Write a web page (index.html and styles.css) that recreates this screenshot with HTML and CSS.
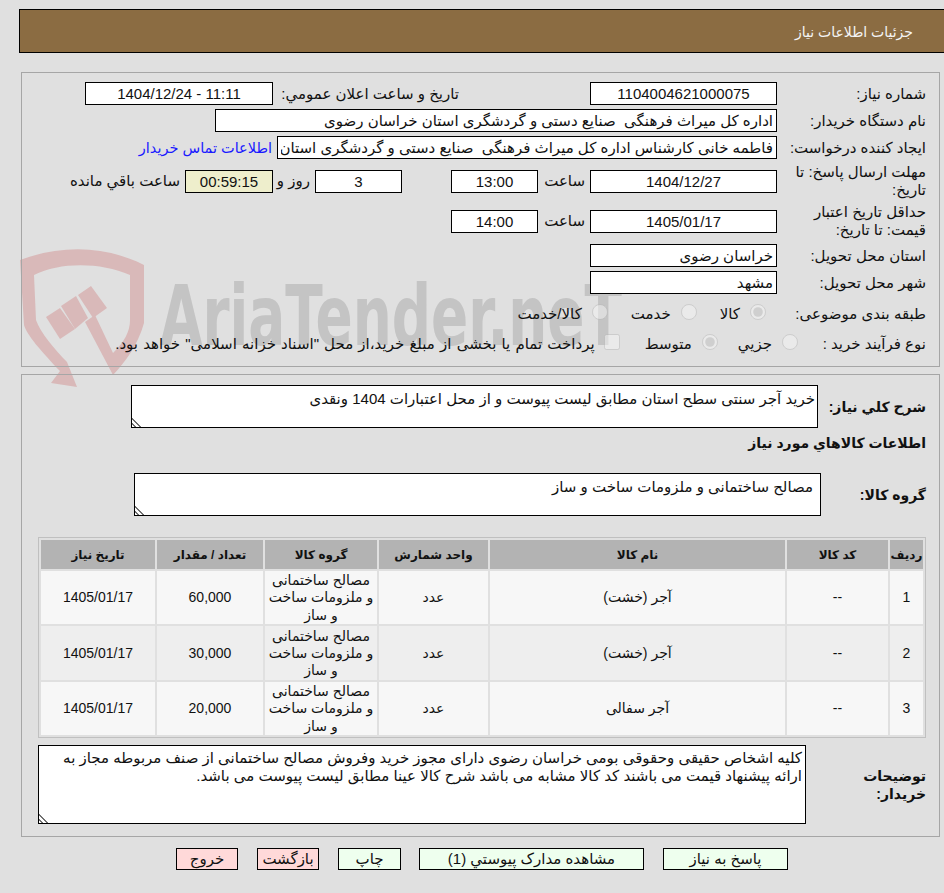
FILE: index.html
```html
<!DOCTYPE html>
<html lang="fa" dir="rtl">
<head>
  <meta charset="UTF-8">
  <title>جزئیات اطلاعات نیاز</title>
  <link rel="stylesheet" href="styles.css">
</head>
<body>

  <svg class="watermark" viewBox="0 0 944 400" width="944" height="400" aria-hidden="true">
    <path class="mark-red" d="M20 260 C60 245 105 245 144 265 L144 323 C138 345 125 362 113 375 L85 322 L95 315 L113 353 C124 342 130 332 130 320 L130 275 C100 262 60 262 34 275 L36 320 C40 332 55 350 67 362 L77 387 L51 383 L60 371 C40 350 27 335 24 325 Z"/>
    <polygon class="mark-red" points="46,317 60,308 75,329 60,339"/>
    <polygon class="mark-red" points="61,306 76,296 88,318 75,329"/>
    <polygon class="mark-red" points="78,295 91,286 107,308 93,318"/>
    <text class="mark-text" x="160" y="345" textLength="462" lengthAdjust="spacingAndGlyphs">AriaTender.neT</text>
  </svg>

  <div class="page-title">جزئیات اطلاعات نیاز</div>

  <div class="panel panel-top">
    <div class="row">
      <label class="row-label">شماره نیاز:</label>
      <input class="box box-date center" value="1104004621000075" readonly>
      <label class="public-label">تاریخ و ساعت اعلان عمومي:</label>
      <input class="box box-public center" value="11:11 - 1404/12/24" readonly>
    </div>
    <div class="row">
      <label class="row-label">نام دستگاه خریدار:</label>
      <input class="box box-buyer" value="اداره کل میراث فرهنگی  صنایع دستی و گردشگری استان خراسان رضوی" readonly>
    </div>
    <div class="row">
      <label class="row-label">ایجاد کننده درخواست:</label>
      <input class="box box-creator" value="فاطمه خانی کارشناس اداره کل میراث فرهنگی  صنایع دستی و گردشگری استان خراسان رضوی" readonly>
      <a class="contact" href="#">اطلاعات تماس خریدار</a>
    </div>
    <div class="row row-tall">
      <label class="row-label">مهلت ارسال پاسخ: تا تاریخ:</label>
      <input class="box box-date center" value="1404/12/27" readonly>
      <span class="hour-label">ساعت</span>
      <input class="box box-hour center" value="13:00" readonly>
      <input class="box box-days center" value="3" readonly>
      <span class="days-label">روز و</span>
      <input class="box box-timer center" value="00:59:15" readonly>
      <span class="left-label">ساعت باقي مانده</span>
    </div>
    <div class="row row-tall row-tall-last">
      <label class="row-label">حداقل تاریخ اعتبار قیمت: تا تاریخ:</label>
      <input class="box box-date center" value="1405/01/17" readonly>
      <span class="hour-label">ساعت</span>
      <input class="box box-hour center" value="14:00" readonly>
    </div>
    <div class="row">
      <label class="row-label">استان محل تحویل:</label>
      <input class="box box-date" value="خراسان رضوی" readonly>
    </div>
    <div class="row row-city">
      <label class="row-label">شهر محل تحویل:</label>
      <input class="box box-date" value="مشهد" readonly>
    </div>
    <div class="row row-options">
      <label class="row-label">طبقه بندی موضوعی:</label>
      <input class="opt opt-first" type="radio" name="kind" checked disabled>
      <span class="opt-text">کالا</span>
      <input class="opt" type="radio" name="kind" disabled>
      <span class="opt-text">خدمت</span>
      <input class="opt" type="radio" name="kind" disabled>
      <span class="opt-text">کالا/خدمت</span>
    </div>
    <div class="row row-options">
      <label class="row-label label-process">نوع فرآیند خرید :</label>
      <input class="opt opt-start" type="radio" name="process" disabled>
      <span class="opt-text">جزیي</span>
      <input class="opt opt-middle" type="radio" name="process" checked disabled>
      <span class="opt-text">متوسط</span>
      <input class="opt opt-check" type="checkbox" disabled>
      <span class="opt-text opt-long">پرداخت تمام یا بخشی از مبلغ خرید،از محل "اسناد خزانه اسلامی" خواهد بود.</span>
    </div>
  </div>

  <div class="panel panel-main">
    <div class="row">
      <label class="strong-label label-desc">شرح کلي نیاز:</label>
      <textarea class="note note-desc" readonly>خرید آجر سنتی سطح استان مطابق لیست پیوست و از محل اعتبارات 1404 ونقدی</textarea>
    </div>

    <h3 class="section-title">اطلاعات کالاهاي مورد نیاز</h3>

    <div class="row">
      <label class="strong-label label-group">گروه کالا:</label>
      <textarea class="note note-group" readonly>مصالح ساختمانی و ملزومات ساخت و ساز</textarea>
    </div>

    <table class="goods">
      <colgroup>
        <col class="c-row"><col class="c-code"><col class="c-name"><col class="c-unit"><col class="c-group"><col class="c-qty"><col class="c-date">
      </colgroup>
      <thead>
        <tr>
          <th>ردیف</th><th>کد کالا</th><th>نام کالا</th><th>واحد شمارش</th><th>گروه کالا</th><th>تعداد / مقدار</th><th>تاریخ نیاز</th>
        </tr>
      </thead>
      <tbody>
        <tr>
          <td>1</td><td>--</td><td>آجر (خشت)</td><td>عدد</td><td>مصالح ساختمانی و ملزومات ساخت و ساز</td><td>60,000</td><td>1405/01/17</td>
        </tr>
        <tr>
          <td>2</td><td>--</td><td>آجر (خشت)</td><td>عدد</td><td>مصالح ساختمانی و ملزومات ساخت و ساز</td><td>30,000</td><td>1405/01/17</td>
        </tr>
        <tr>
          <td>3</td><td>--</td><td>آجر سفالی</td><td>عدد</td><td>مصالح ساختمانی و ملزومات ساخت و ساز</td><td>20,000</td><td>1405/01/17</td>
        </tr>
      </tbody>
    </table>

    <div class="row row-notes">
      <label class="strong-label label-notes">توضیحات خریدار:</label>
      <textarea class="note note-notes" readonly>کلیه اشخاص حقیقی وحقوقی بومی خراسان رضوی دارای مجوز خرید وفروش مصالح ساختمانی از صنف مربوطه مجاز به ارائه پیشنهاد قیمت می باشند کد کالا مشابه می باشد شرح کالا عینا مطابق لیست پیوست می باشد.</textarea>
    </div>
  </div>

  <div class="actions">
    <button class="btn btn-green btn-reply">پاسخ به نیاز</button>
    <button class="btn btn-green btn-docs">مشاهده مدارک پیوستي (1)</button>
    <button class="btn btn-green btn-print">چاپ</button>
    <button class="btn btn-red btn-back">بازگشت</button>
    <button class="btn btn-red btn-exit">خروج</button>
  </div>

</body>
</html>
```

FILE: styles.css
```css
html, body {
  overflow: hidden;
}

body {
  margin: 0;
  height: 893px;
  position: relative;
  background: #e0e0e0;
  color: #111;
  font-family: "Liberation Sans", "DejaVu Sans", sans-serif;
  font-size: 15px;
}

.watermark {
  position: absolute;
  top: 0;
  left: 0;
  direction: ltr;
}

.mark-red {
  fill: #d9b9b9;
}

.mark-text {
  fill: #c4c4c4;
  font-family: "DejaVu Sans", sans-serif;
  font-weight: 700;
  font-size: 84px;
}

.page-title {
  position: relative;
  margin: 9px 0 0 19px;
  height: 42px;
  line-height: 44px;
  padding-right: 31px;
  background: #8b6c42;
  border: 1px solid #000;
  border-right: 0;
  color: #f4f4f4;
  font-size: 14px;
}

.panel {
  position: relative;
  width: 917px;
  margin-right: 4px;
  border: 1px solid #a6a6a6;
}

.panel-top {
  margin-top: 19px;
  height: 284px;
  padding-top: 9px;
}

.panel-main {
  margin-top: 7px;
  height: 451px;
  padding-top: 10px;
}

.row {
  display: flex;
  align-items: center;
  min-height: 23px;
  margin: 0 13px 4px 0;
}

.row-tall {
  height: 36px;
}

.row-tall-last {
  margin-bottom: 5px;
}

.row-city {
  margin-bottom: 7px;
}

.row-options {
  height: 26px;
}

.row-label {
  flex: none;
  width: 149px;
  line-height: 18px;
}

.label-process {
  width: 128px;
}

.box {
  flex: none;
  box-sizing: border-box;
  height: 23px;
  margin: 0;
  padding: 0 3px;
  border: 1px solid #000;
  border-radius: 0;
  outline: none;
  background: #fff;
  color: #111;
  font-family: inherit;
  font-size: 15px;
}

.center {
  text-align: center;
}

.box-date { width: 187px; }
.box-public { width: 188px; margin-right: 5px; }
.box-buyer { width: 562px; }
.box-creator { width: 500px; }
.box-hour { width: 87px; }
.box-days { width: 87px; margin-right: 49px; }
.box-timer { width: 88px; background: #eeeecc; }

.public-label {
  width: 181px;
  margin-right: 131px;
  white-space: nowrap;
}

.contact {
  margin-right: 5px;
  color: #1a1aff;
  font-size: 14.5px;
  text-decoration: none;
  white-space: nowrap;
}

.hour-label {
  width: 42px;
  margin: 0 5px;
}

.days-label {
  width: 28px;
  margin: 0 5px 0 9px;
  white-space: nowrap;
}

.left-label {
  margin-right: 5px;
  white-space: nowrap;
}

.opt {
  flex: none;
  width: 16px;
  height: 16px;
  margin: 0 23px 4px 10px;
  opacity: 0.75;
}

.opt-first {
  margin-right: 11px;
}

.opt-start {
  margin-right: 0;
}

.opt-middle {
  margin-right: 20px;
}

.opt-check {
  margin-right: 25px;
  margin-left: 9px;
}

.opt-text {
  white-space: nowrap;
}

.opt-long {
  word-spacing: 1px;
}

.strong-label {
  flex: none;
  box-sizing: border-box;
  font-size: 14px;
  font-weight: 700;
  line-height: 18px;
}

.label-desc { width: 108px; }
.label-group { width: 105px; }
.label-notes { width: 120px; padding-left: 50px; }

.note {
  flex: none;
  box-sizing: border-box;
  margin: 0;
  border: 1px solid #000;
  border-radius: 0;
  outline: none;
  background: #fff;
  color: #111;
  font-family: inherit;
  font-size: 15px;
  line-height: 18px;
}

/* two short dark strokes in the corner, like the grip in the screenshot */
.note::-webkit-resizer {
  background: linear-gradient(45deg, transparent 0 2px, #707070 2px 3.5px, transparent 3.5px 5px, #707070 5px 6.5px, transparent 6.5px);
}

.note-desc {
  width: 687px;
  height: 43px;
  padding: 4px 2px;
}

.note-group {
  width: 687px;
  height: 43px;
  padding: 4px 7px;
}

.note-notes {
  width: 768px;
  height: 79px;
  padding: 3px;
}

.section-title {
  margin: 0 13px 0 0;
  height: 41px;
  line-height: 22px;
  font-size: 14px;
}

.goods {
  width: 888px;
  margin: 21px 13px 7px 0;
  table-layout: fixed;
  border: 1px solid #c0c0c0;
  border-spacing: 2px;
}

.c-row { width: 33px; }
.c-code { width: 101px; }
.c-name { width: 295px; }
.c-unit { width: 109px; }
.c-group { width: 112px; }
.c-qty { width: 106px; }
.c-date { width: 114px; }

.goods th {
  height: 29px;
  padding: 0;
  background: #b3b3b3;
  font-size: 12px;
}

.goods td {
  height: 52px;
  padding: 1px 3px 0;
  text-align: center;
  font-size: 14px;
  line-height: 17.3px;
  background: #f7f7f7;
}

.goods tbody tr:nth-child(2) td {
  height: 53px;
  background: #eeeeee;
}

.row-notes {
  margin-bottom: 0;
}

.actions {
  position: relative;
  display: flex;
  gap: 19px;
  margin: 11px 156px 0 0;
}

.btn {
  box-sizing: border-box;
  height: 22px;
  padding: 0;
  border: 1px solid #000;
  border-radius: 0;
  color: #111;
  font-family: inherit;
  font-size: 15px;
}

.btn-green { background: #eeffee; }
.btn-red { background: #ffd9d9; }
.btn-reply { width: 125px; }
.btn-docs { width: 225px; }
.btn-print { width: 63px; margin-right: -1px; }
.btn-back { width: 62px; }
.btn-exit { width: 62px; }
```
